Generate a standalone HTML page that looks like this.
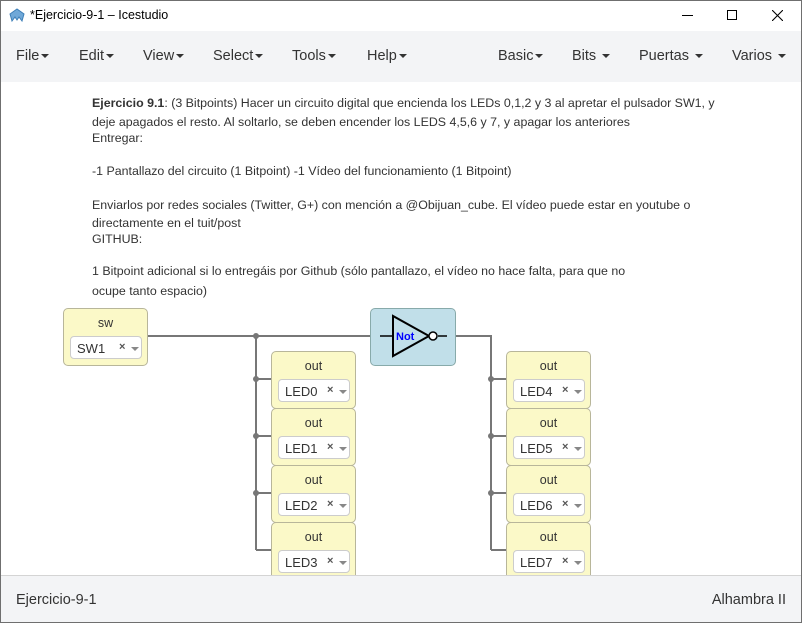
<!DOCTYPE html><html><head><style>
*{margin:0;padding:0;box-sizing:border-box}
body{width:802px;height:623px;position:relative;overflow:hidden;font-family:"Liberation Sans",sans-serif;background:#fff}
.win{position:absolute;inset:0;border:1px solid #6f6f6f}
.t{position:absolute;white-space:nowrap}
.menu{position:absolute;left:1px;top:31px;width:800px;height:51px;background:#f3f4f6}
.m{position:absolute;top:48px;font-size:14.5px;color:#333}
.car{display:inline-block;width:0;height:0;border-left:4px solid transparent;border-right:4px solid transparent;border-top:4px solid #333;vertical-align:middle;margin-left:2px}
.txt{position:absolute;left:92px;font-size:12.4px;color:#333;white-space:nowrap}
.blk{position:absolute;background:#fbf9c8;border:1px solid #b8b69a;border-radius:5px;width:85px;height:58px}
.blk .h{position:absolute;top:7px;width:100%;text-align:center;font-size:12.5px;color:#333}
.sel{position:absolute;left:6px;top:27px;width:72px;height:23px;background:#fff;border:1px solid #ccc;border-radius:4px;font-size:13px;color:#333;padding:4px 0 0 6px}
.sel .x{position:absolute;left:48px;top:4px;font-size:11px;color:#555;font-weight:bold}
.sel .c{position:absolute;left:60px;top:10px;border-left:4px solid transparent;border-right:4px solid transparent;border-top:4px solid #888}
.foot{position:absolute;left:1px;top:575px;width:800px;height:47px;background:#f3f4f6;border-top:1px solid #d4d4d4}
</style></head><body>
<div class="win"></div>
<svg class="t" style="left:9px;top:8px" width="16" height="14" viewBox="0 0 16 14"><path d="M1 6 L8 1 L15 6 L13 13 L10 9 L8 12 L6 9 L3 13Z" fill="#6fa8d8" stroke="#3d7fb8" stroke-width="1"/></svg>
<div class="t" style="left:30px;top:8px;font-size:12.5px;color:#000">*Ejercicio-9-1 – Icestudio</div>
<div class="t" style="left:682px;top:15px;width:11px;height:1px;background:#000"></div>
<div class="t" style="left:727px;top:10px;width:10px;height:10px;border:1px solid #000"></div>
<svg class="t" style="left:772px;top:10px" width="11" height="11"><path d="M0 0L11 11M11 0L0 11" stroke="#000" stroke-width="1.1"/></svg>
<div class="menu"></div>
<div class="m" style="left:16px">File<span class="car"></span></div>
<div class="m" style="left:79px">Edit<span class="car"></span></div>
<div class="m" style="left:143px">View<span class="car"></span></div>
<div class="m" style="left:213px">Select<span class="car"></span></div>
<div class="m" style="left:292px">Tools<span class="car"></span></div>
<div class="m" style="left:367px">Help<span class="car"></span></div>
<div class="m" style="left:498px">Basic<span class="car"></span></div>
<div class="m" style="left:572px">Bits <span class="car"></span></div>
<div class="m" style="left:639px">Puertas <span class="car"></span></div>
<div class="m" style="left:732px">Varios <span class="car"></span></div>
<div class="txt" style="top:96px"><b>Ejercicio 9.1</b>: (3 Bitpoints) Hacer un circuito digital que encienda los LEDs 0,1,2 y 3 al apretar el pulsador SW1, y</div>
<div class="txt" style="top:115px">deje apagados el resto. Al soltarlo, se deben encender los LEDS 4,5,6 y 7, y apagar los anteriores</div>
<div class="txt" style="top:131px">Entregar:</div>
<div class="txt" style="top:164px">-1 Pantallazo del circuito (1 Bitpoint) -1 Vídeo del funcionamiento (1 Bitpoint)</div>
<div class="txt" style="top:198px">Enviarlos por redes sociales (Twitter, G+) con mención a @Obijuan_cube. El vídeo puede estar en youtube o</div>
<div class="txt" style="top:216px">directamente en el tuit/post</div>
<div class="txt" style="top:232px">GITHUB:</div>
<div class="txt" style="top:264px">1 Bitpoint adicional si lo entregáis por Github (sólo pantallazo, el vídeo no hace falta, para que no</div>
<div class="txt" style="top:284px">ocupe tanto espacio)</div>
<svg class="t" style="left:0;top:0" width="802" height="623">
<g stroke="#777" stroke-width="2" fill="none">
<path d="M148 336H370M256 336V550M256 379H271M256 436H271M256 493H271M256 550H271"/>
<path d="M455 336H491V550M491 379H506M491 436H506M491 493H506M491 550H506"/>
</g>
<g fill="#777"><circle cx="256" cy="336" r="3"/><circle cx="256" cy="379" r="3"/><circle cx="256" cy="436" r="3"/><circle cx="256" cy="493" r="3"/><circle cx="491" cy="379" r="3"/><circle cx="491" cy="436" r="3"/><circle cx="491" cy="493" r="3"/></g>
</svg>
<div class="blk" style="left:63px;top:308px"><div class="h">sw</div><div class="sel">SW1<span class="x">×</span><span class="c"></span></div></div>
<div class="t" style="left:370px;top:308px;width:86px;height:58px;background:#c1dfe9;border:1px solid #8aa;border-radius:5px"></div>
<svg class="t" style="left:370px;top:308px" width="86" height="58"><path d="M10 28H23M68 28H77" stroke="#000" stroke-width="1.5"/><path d="M23 8L23 48L59 28Z" fill="none" stroke="#000" stroke-width="2"/><circle cx="63" cy="28" r="4" fill="#fff" stroke="#000" stroke-width="1.5"/><text x="26" y="32" font-family="Liberation Sans" font-weight="bold" font-size="11" fill="#00f">Not</text></svg>
<div class="blk" style="left:271px;top:351px"><div class="h">out</div><div class="sel">LED0<span class="x">×</span><span class="c"></span></div></div>
<div class="blk" style="left:271px;top:408px"><div class="h">out</div><div class="sel">LED1<span class="x">×</span><span class="c"></span></div></div>
<div class="blk" style="left:271px;top:465px"><div class="h">out</div><div class="sel">LED2<span class="x">×</span><span class="c"></span></div></div>
<div class="blk" style="left:271px;top:522px"><div class="h">out</div><div class="sel">LED3<span class="x">×</span><span class="c"></span></div></div>
<div class="blk" style="left:506px;top:351px"><div class="h">out</div><div class="sel">LED4<span class="x">×</span><span class="c"></span></div></div>
<div class="blk" style="left:506px;top:408px"><div class="h">out</div><div class="sel">LED5<span class="x">×</span><span class="c"></span></div></div>
<div class="blk" style="left:506px;top:465px"><div class="h">out</div><div class="sel">LED6<span class="x">×</span><span class="c"></span></div></div>
<div class="blk" style="left:506px;top:522px"><div class="h">out</div><div class="sel">LED7<span class="x">×</span><span class="c"></span></div></div>
<div class="foot"></div>
<div class="t" style="left:16px;top:592px;font-size:14.5px;color:#333">Ejercicio-9-1</div>
<div class="t" style="right:16px;top:592px;font-size:14.5px;color:#333">Alhambra II</div>
</body></html>
